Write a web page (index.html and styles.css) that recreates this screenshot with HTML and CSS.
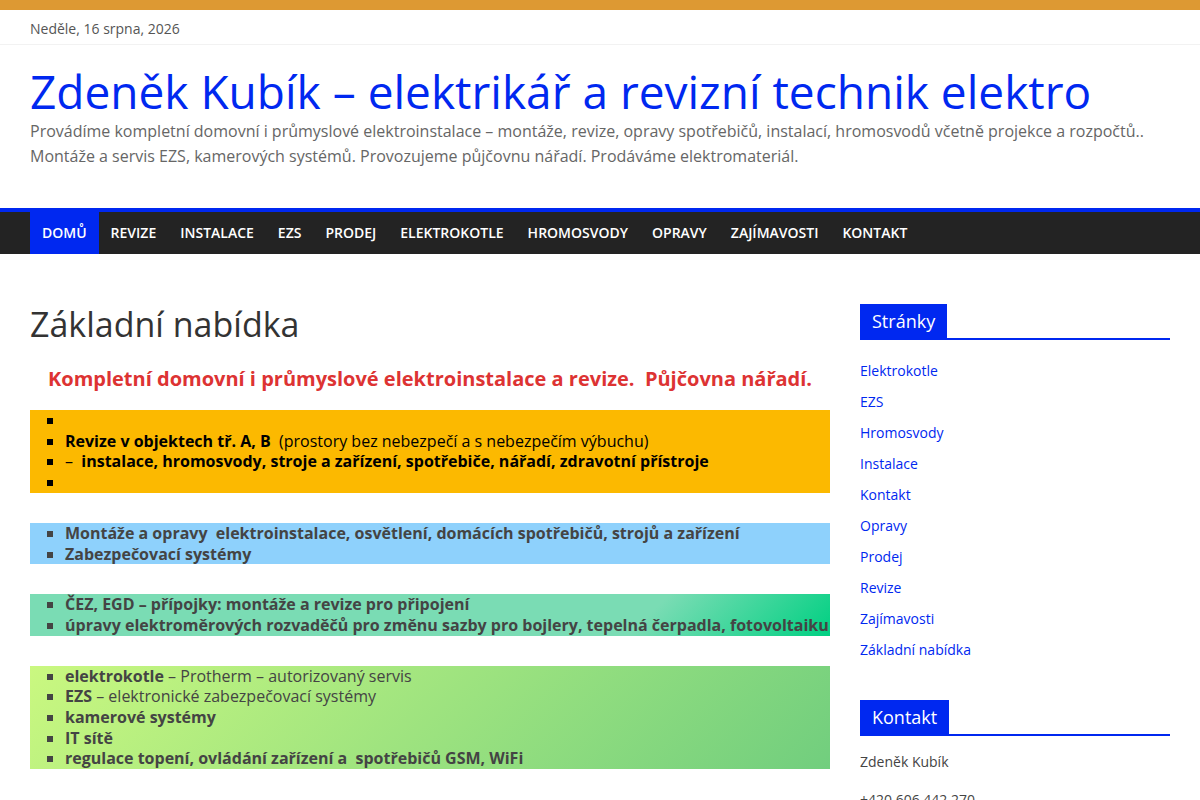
FILE: index.html
```html
<!DOCTYPE html>
<html lang="cs">
<head>
<meta charset="utf-8">
<title>Zdeněk Kubík – elektrikář a revizní technik elektro</title>
<link rel="stylesheet" href="styles.css">
</head>
<body>
<div class="top-stripe"></div>
<div class="date-bar">
  <div class="container">Neděle, 16 srpna, 2026</div>
</div>
<header class="site-header">
  <div class="container">
    <h1 class="site-title"><a href="#">Zdeněk Kubík – elektrikář a revizní technik elektro</a></h1>
    <p class="tagline">Provádíme kompletní domovní i průmyslové elektroinstalace – montáže, revize, opravy spotřebičů, instalací, hromosvodů včetně projekce a rozpočtů.. Montáže a servis EZS, kamerových systémů. Provozujeme půjčovnu nářadí. Prodáváme elektromateriál.</p>
  </div>
</header>
<nav class="main-nav">
  <div class="container">
    <ul class="menu">
      <li class="active"><a href="#">Domů</a></li>
      <li><a href="#">Revize</a></li>
      <li><a href="#">Instalace</a></li>
      <li><a href="#">EZS</a></li>
      <li><a href="#">Prodej</a></li>
      <li><a href="#">Elektrokotle</a></li>
      <li><a href="#">Hromosvody</a></li>
      <li><a href="#">Opravy</a></li>
      <li><a href="#">Zajímavosti</a></li>
      <li><a href="#">Kontakt</a></li>
    </ul>
  </div>
</nav>
<div class="container main">
  <main class="content">
    <h2 class="entry-title">Základní nabídka</h2>
    <p class="lead">Kompletní domovní i průmyslové elektroinstalace a revize.&nbsp; Půjčovna nářadí.</p>

    <ul class="box box-amber">
      <li></li>
      <li><strong>Revize v objektech tř. A, B</strong>&nbsp; (prostory bez nebezpečí a s nebezpečím výbuchu)</li>
      <li>–&nbsp; <strong>instalace, hromosvody, stroje a zařízení, spotřebiče, nářadí, zdravotní přístroje</strong></li>
      <li></li>
    </ul>

    <ul class="box box-cyan">
      <li><strong>Montáže a opravy&nbsp; elektroinstalace, osvětlení, domácích spotřebičů, strojů a zařízení</strong></li>
      <li><strong>Zabezpečovací systémy</strong></li>
    </ul>

    <ul class="box box-green">
      <li><strong>ČEZ, EGD – přípojky: montáže a revize pro připojení</strong></li>
      <li><strong>úpravy elektroměrových rozvaděčů pro změnu sazby pro bojlery, tepelná čerpadla, fotovoltaiku</strong></li>
    </ul>

    <ul class="box box-grass">
      <li><strong>elektrokotle</strong> – Protherm – autorizovaný servis</li>
      <li><strong>EZS</strong> – elektronické zabezpečovací systémy</li>
      <li><strong>kamerové systémy</strong></li>
      <li><strong>IT sítě</strong></li>
      <li><strong>regulace topení, ovládání zařízení a&nbsp; spotřebičů GSM, WiFi</strong></li>
    </ul>
  </main>
  <aside class="sidebar">
    <section class="widget">
      <h3 class="widget-title"><span>Stránky</span></h3>
      <ul class="page-list">
        <li><a href="#">Elektrokotle</a></li>
        <li><a href="#">EZS</a></li>
        <li><a href="#">Hromosvody</a></li>
        <li><a href="#">Instalace</a></li>
        <li><a href="#">Kontakt</a></li>
        <li><a href="#">Opravy</a></li>
        <li><a href="#">Prodej</a></li>
        <li><a href="#">Revize</a></li>
        <li><a href="#">Zajímavosti</a></li>
        <li><a href="#">Základní nabídka</a></li>
      </ul>
    </section>
    <section class="widget">
      <h3 class="widget-title"><span>Kontakt</span></h3>
      <p class="contact-line">Zdeněk Kubík</p>
      <p class="contact-line">+420 606 442 270</p>
    </section>
  </aside>
</div>
</body>
</html>
```
FILE: styles.css
```css
* { box-sizing: border-box; }
html, body { margin: 0; padding: 0; }
body {
  font-family: "Open Sans", "Liberation Sans", sans-serif;
  color: #444;
  background: #fff;
  font-size: 15px;
}
a { text-decoration: none; }

.container {
  width: 1200px;
  padding: 0 30px;
  margin: 0 auto;
}

.top-stripe {
  height: 10px;
  background: #dd9933;
}

.date-bar {
  border-bottom: 1px solid #f2f2f2;
  font-size: 14px;
  color: #555;
  line-height: 20px;
  padding: 9px 0 5px;
}

.site-header {
  padding: 18px 0 39px;
}
.site-title {
  margin: 0;
  font-size: 46px;
  font-weight: 400;
  line-height: 56px;
}
.site-title a { color: #0028f0; }
.tagline {
  margin: 0;
  font-size: 16px;
  line-height: 25px;
  color: #666;
}

.main-nav {
  background: #232323;
  border-top: 4px solid #0028f0;
}
.menu {
  list-style: none;
  margin: 0;
  padding: 0;
  display: flex;
}
.menu li a {
  display: block;
  padding: 0 12px;
  line-height: 42px;
  font-size: 14px;
  font-weight: 600;
  text-transform: uppercase;
  color: #fff;
}
.menu li.active a { background: #0028f0; }

.main {
  display: flex;
  gap: 30px;
  padding-top: 40px;
}
.content { width: 800px; }
.sidebar { width: 310px; padding-top: 10px; }

.entry-title {
  margin: 0 0 10px;
  font-size: 34px;
  font-weight: 400;
  line-height: 60px;
  color: #333;
}
.lead {
  margin: 0 0 16px;
  text-align: center;
  color: #dd3333;
  font-weight: 700;
  font-size: 20px;
  line-height: 30px;
}

.box {
  list-style: square;
  margin: 0 0 30px;
  padding: 0 0 0 35px;
  font-size: 16px;
  line-height: 20.7px;
  color: #444;
}
.box li { min-height: 20.7px; }
.box strong { font-weight: 700; }
.box-amber { background: #fcb900; color: #000; }
.box-cyan { background: #8ed1fc; }
.box-green { background: linear-gradient(135deg, #7adcb4 76%, #00d082 100%); }
.box-grass { background: linear-gradient(135deg, #caf880 0%, #71ce7e 100%); }

.widget { margin-bottom: 35px; }
.widget-title {
  margin: 0 0 15px;
  border-bottom: 2px solid #0028f0;
  font-size: 18px;
  font-weight: 400;
  line-height: 34px;
}
.widget-title span {
  display: inline-block;
  background: #0028f0;
  color: #fff;
  padding: 0 12px;
  vertical-align: bottom;
}
.page-list {
  list-style: none;
  margin: 0;
  padding: 0;
}
.page-list li {
  font-size: 14px;
  line-height: 31px;
}
.page-list a { color: #0028f0; }
.contact-line {
  margin: 0 0 16px;
  font-size: 14px;
  line-height: 22px;
  color: #444;
}
```
